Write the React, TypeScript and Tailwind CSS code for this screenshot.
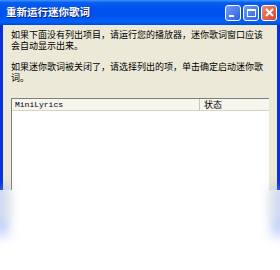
export default function App() {
  return (
    <div className="w-[280px] h-[270px] overflow-hidden bg-white font-['Noto_Sans_CJK_SC',sans-serif]">
      {/* ========== Window ========== */}
      <div className="h-[190px] flex flex-col bg-[#0831d9] overflow-hidden">
        <div className="h-[25px] shrink-0 flex items-center justify-between pl-[6px] pr-[3px] bg-[linear-gradient(to_bottom,#3d95ff_0%,#0a5fee_10%,#0053ee_30%,#0050ee_60%,#0062f8_88%,#0048d8_100%)]">
          <span className="text-white text-[10.5px] font-bold leading-none [text-shadow:1px_1px_0_#0a1e7a]">
            重新运行迷你歌词
          </span>
          <div className="flex gap-[2px]">
            <button className="w-[16px] h-[16px] rounded-[3px] border border-white bg-[linear-gradient(135deg,#6f9cf5,#2e62e0)] flex items-end justify-center pb-[3px]">
              <span className="block w-[5px] h-[2px] bg-white -ml-[4px]" />
            </button>
            <button className="w-[16px] h-[16px] rounded-[3px] border border-white bg-[linear-gradient(135deg,#6f9cf5,#2e62e0)] flex items-center justify-center">
              <span className="block w-[9px] h-[8px] border border-white border-t-2" />
            </button>
            <button className="w-[16px] h-[16px] rounded-[3px] border border-white bg-[linear-gradient(135deg,#f08a6c,#d7422a)] flex items-center justify-center">
              <svg width="9" height="9" viewBox="0 0 9 9">
                <path d="M1 1 L8 8 M8 1 L1 8" stroke="white" strokeWidth="2" />
              </svg>
            </button>
          </div>
        </div>

        <div className="flex-1 mx-[3px] bg-[#ece9d8] px-[8px] pt-[4px] flex flex-col">
          <div className="text-[9px] leading-[11px] text-black whitespace-nowrap">
            <div>如果下面没有列出项目，请运行您的播放器，迷你歌词窗口应该</div>
            <div>会自动显示出来。</div>
          </div>
          <div className="mt-[10px] text-[9px] leading-[11px] text-black whitespace-nowrap">
            <div>如果迷你歌词被关闭了，请选择列出的项，单击确定启动迷你歌</div>
            <div>词。</div>
          </div>

          <div className="mt-[15px] flex-1 border-l border-t border-[#7f7f7f] bg-white flex flex-col">
            <div className="h-[12px] flex bg-[#f6f5ee] border-b border-[#d6d3c4]">
              <div className="w-[188px] border-r border-[#c7c5b2] pl-[3px] flex items-center text-[8px] leading-none font-['Liberation_Mono',monospace]">
                MiniLyrics
              </div>
              <div className="flex-1 pl-[4px] flex items-center text-[9px] leading-none">
                状态
              </div>
            </div>
            <div className="flex-1" />
          </div>
        </div>
      </div>

      {/* ========== Faded bottom ========== */}
      <div className="relative h-[80px] bg-white">
        <div className="absolute left-[-6px] top-[-4px] w-[14px] h-[50px] bg-[#4e7ef0] opacity-40 blur-[6px]" />
        <div className="absolute right-[-6px] top-[-4px] w-[14px] h-[50px] bg-[#4e7ef0] opacity-40 blur-[6px]" />
        <div className="absolute left-[2px] top-0 w-[10px] h-[30px] bg-[#ece9d8] opacity-50 blur-[4px]" />
        <div className="absolute right-[2px] top-0 w-[10px] h-[30px] bg-[#ece9d8] opacity-50 blur-[4px]" />
      </div>
    </div>
  );
}
